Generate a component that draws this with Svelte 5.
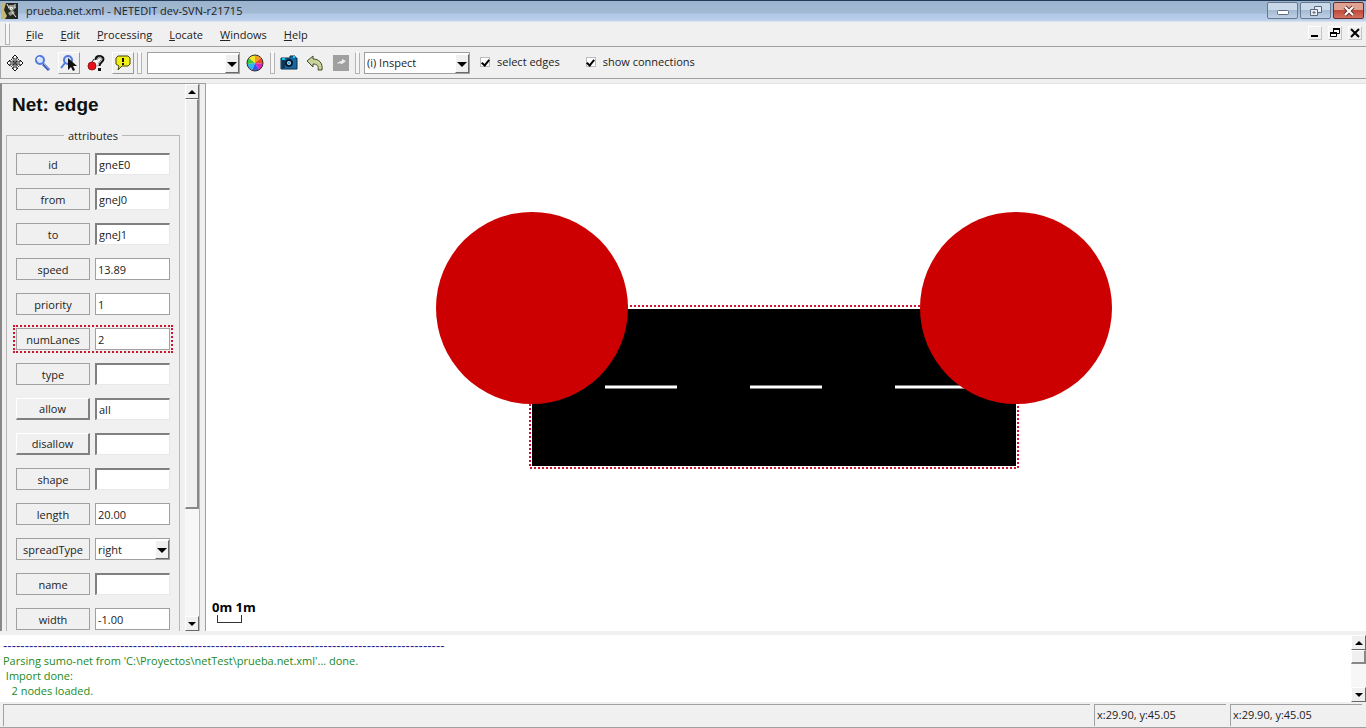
<script>
	let menus = ['File', 'Edit', 'Processing', 'Locate', 'Windows', 'Help'];

	let attributes = [
		{ name: 'id', value: 'gneE0', kind: 'sunken' },
		{ name: 'from', value: 'gneJ0', kind: 'sunken' },
		{ name: 'to', value: 'gneJ1', kind: 'sunken' },
		{ name: 'speed', value: '13.89' },
		{ name: 'priority', value: '1' },
		{ name: 'numLanes', value: '2', marked: true },
		{ name: 'type', value: '', kind: 'sunken' },
		{ name: 'allow', value: 'all', kind: 'sunken', raised: true },
		{ name: 'disallow', value: '', kind: 'sunken', raised: true },
		{ name: 'shape', value: '', kind: 'sunken' },
		{ name: 'length', value: '20.00' },
		{ name: 'spreadType', value: 'right', options: ['right', 'center'] },
		{ name: 'name', value: '', kind: 'sunken' },
		{ name: 'width', value: '-1.00' }
	];

	let selectEdges = true;
	let showConnections = true;
	let view = '';
	let mode = '(i) Inspect';
	let position = 'x:29.90, y:45.05';
	let rule = '-'.repeat(102);
</script>

<div class="window">
	<header class="titlebar">
		<svg class="app-icon" width="17" height="16" viewBox="0 0 17 16">
			<rect width="17" height="16" fill="#252820" />
			<path d="M0 0h5L3 7l3 6-2 3H0z" fill="#c3b878" />
			<path d="M8 2h5l2 3-3 2 2 3-5 3-2-3 3-2-3-3z" fill="#91968a" />
			<path d="M9 4l3 1-2 2zM11 9l4 5M6 1l2 4M14 1v4" stroke="#eee" fill="none" />
		</svg>
		<span class="title">prueba.net.xml - NETEDIT dev-SVN-r21715</span>
		<div class="window-buttons">
			<button aria-label="Minimize">
				<svg width="14" height="12" viewBox="0 0 14 12">
					<rect x="1.5" y="5.5" width="11" height="4" rx="1" fill="#fff" stroke="#5c6879" />
				</svg>
			</button>
			<button aria-label="Restore">
				<svg width="14" height="12" viewBox="0 0 14 12" fill="#e6edf6" stroke="#5c6879">
					<path d="M5.5 1.5h7v6h-7z" />
					<path d="M1.5 4.5h7v6h-7z" />
					<path d="M4 7h2v1H4z" />
				</svg>
			</button>
			<button class="close" aria-label="Close">
				<svg width="14" height="12" viewBox="0 0 14 12">
					<path d="M3 2l8 8M11 2l-8 8" stroke="#6b3533" stroke-width="4" />
					<path d="M3 2l8 8M11 2l-8 8" stroke="#fff" stroke-width="2" />
				</svg>
			</button>
		</div>
	</header>

	<nav class="menubar">
		<span class="grip"></span>
		{#each menus as menu}
			<button class="menu"><u>{menu[0]}</u>{menu.slice(1)}</button>
		{/each}
		<div class="child-buttons">
			<button aria-label="Minimize view">
				<svg width="12" height="12" viewBox="0 0 12 12"><path d="M2 8h7v2H2z" /></svg>
			</button>
			<button aria-label="Restore view">
				<svg width="12" height="12" viewBox="0 0 12 12" fill="#fff" stroke="#000">
					<path d="M4.5 1.5h6v5h-6z" /><path d="M4 2h7" stroke-width="2" />
					<path d="M1.5 5.5h6v4h-6z" /><path d="M1 6h7" stroke-width="2" />
				</svg>
			</button>
			<button aria-label="Close view">
				<svg width="12" height="12" viewBox="0 0 12 12">
					<path d="M2 2l8 8M10 2l-8 8" stroke="#000" stroke-width="2" />
				</svg>
			</button>
		</div>
	</nav>

	<div class="toolbar">
		<div class="tools">
			<button class="tool" aria-label="Recenter view">
				<svg width="18" height="18" viewBox="0 0 18 18" fill="#fff" stroke="#111">
					<path d="M9 1l3 3h-2v4h4V6l3 3-3 3v-2h-4v4h2l-3 3-3-3h2v-4H4v2L1 9l3-3v2h4V4H6z" />
					<path d="M5 5l8 8M13 5l-8 8" stroke-dasharray="2 1" />
					<circle cx="9" cy="9" r="1" />
				</svg>
			</button>
			<button class="tool" aria-label="Edit viewport">
				<svg width="18" height="18" viewBox="0 0 18 18">
					<path d="M10 10l6 6" stroke="#4360b8" stroke-width="3" />
					<path d="M11 10l5 5" stroke="#8fa8e8" />
					<circle cx="7" cy="6" r="4" fill="#d3e5fa" stroke="#5277dc" stroke-width="2" />
					<path d="M4 6a3 3 0 0 1 3-3" stroke="#fff" stroke-width="1" fill="none" />
				</svg>
			</button>
			<button class="tool raised" aria-label="Zoom to selection">
				<svg width="18" height="18" viewBox="0 0 18 18">
					<circle cx="8" cy="6" r="4" fill="#d3e5fa" stroke="#5277dc" stroke-width="2" />
					<path d="M5 9l-4 5" stroke="#5277dc" stroke-width="2" />
					<path d="M8 4v12l3-3 2 4 2-1-2-4h4z" fill="#111" />
				</svg>
			</button>
			<button class="tool" aria-label="Toggle tooltips">
				<svg width="18" height="18" viewBox="0 0 18 18" fill="none">
					<path d="M9 6c0-5 7-4 7-1 0 3-4 3-4 7" stroke="#111" stroke-width="3" />
					<path d="M10 6c0-4 5-3 5-1 0 3-4 3-4 7" stroke="#ddd" />
					<path d="M11 14h3v3h-3z" fill="#111" />
					<circle cx="5" cy="12" r="4" fill="#e80f18" stroke="#9f1119" />
					<path d="M5 8l2-3" stroke="#321" />
				</svg>
			</button>
			<button class="tool raised" aria-label="Show bubble help">
				<svg width="18" height="18" viewBox="0 0 18 18">
					<path d="M4 2h10l2 2v6l-2 2H8l-4 4 1-4-3-2V4z" fill="#f2ef18" stroke="#44430a" />
					<path d="M9 4v4M9 9v2" stroke="#111" stroke-width="2" />
				</svg>
			</button>
		</div>
		<span class="grip"></span>
		<div class="combo scheme">
			<select aria-label="Color scheme" bind:value={view}><option value=""></option></select>
			<span class="arrow"></span>
		</div>
		<button class="tool wheel" aria-label="Edit coloring scheme">
			<svg width="18" height="18" viewBox="0 0 18 18">
				<path d="M9 9V1a8 8 0 0 1 6 3z" fill="#f69b18" />
				<path d="M9 9l6-5a8 8 0 0 1 2 6z" fill="#f04922" />
				<path d="M9 9l8 1a8 8 0 0 1-4 6z" fill="#df22bd" />
				<path d="M9 9l4 7a8 8 0 0 1-7 0z" fill="#3853e8" />
				<path d="M9 9l-3 7a8 8 0 0 1-5-6z" fill="#28b9ea" />
				<path d="M9 9l-8 1a8 8 0 0 1 2-6z" fill="#40c936" />
				<path d="M9 9L3 4a8 8 0 0 1 6-3z" fill="#f4e42a" />
				<circle cx="9" cy="9" r="8" fill="none" stroke="#33302b" />
			</svg>
		</button>
		<span class="grip"></span>
		<div class="tools edit">
			<button class="tool" aria-label="Make snapshot">
				<svg width="18" height="18" viewBox="0 0 18 18">
					<path d="M1 4h9V2h5v2h2v11H1z" fill="#1869a2" stroke="#082b47" />
					<path d="M2 5h3v9H2z" fill="#0a3659" />
					<path d="M2 5h3M13 3h2" stroke="#18c8ee" stroke-width="2" />
					<circle cx="9" cy="9" r="3" fill="#bfe7fa" stroke="#071d31" stroke-width="2" />
					<circle cx="9" cy="9" r="1" fill="#278ed3" />
				</svg>
			</button>
			<button class="tool" aria-label="Undo">
				<svg width="18" height="18" viewBox="0 0 18 18">
					<path d="M1 7l6-5v3c6 0 10 4 9 11h-4c1-4-1-6-5-6v3z" fill="#c8d39c" stroke="#3f4a27" />
				</svg>
			</button>
			<button class="tool" aria-label="Redo" disabled>
				<svg width="18" height="18" viewBox="0 0 18 18">
					<path d="M1 1h16v16H1z" fill="#a0a0a0" />
					<path d="M5 10c1-2 3-3 5-3V5l4 2-4 3c-2-1-3-1-5 0z" fill="#eee" />
				</svg>
			</button>
		</div>
		<span class="grip"></span>
		<div class="combo mode">
			<select aria-label="Edit mode" bind:value={mode}><option>(i) Inspect</option></select>
			<span class="arrow"></span>
		</div>
		<label class="check"><input type="checkbox" bind:checked={selectEdges} />select edges</label>
		<label class="check"
			><input type="checkbox" bind:checked={showConnections} />show connections</label
		>
	</div>

	<main>
		<aside>
			<div class="panel">
				<h1>Net: edge</h1>
				<fieldset>
					<legend>attributes</legend>
					{#each attributes as attr}
						<div class="row" class:marked={attr.marked}>
							<button class="attr" class:lifted={attr.raised}>{attr.name}</button>
							{#if attr.options}
								<div class="combo">
									<select aria-label={attr.name} bind:value={attr.value}>
										{#each attr.options as option}<option>{option}</option>{/each}
									</select>
									<span class="arrow"></span>
								</div>
							{:else}
								<input
									class={attr.kind}
									type="text"
									aria-label={attr.name}
									bind:value={attr.value}
								/>
							{/if}
						</div>
					{/each}
				</fieldset>
			</div>
			<div class="scrollbar">
				<button class="step" aria-label="Scroll up"><i class="up"></i></button>
				<div class="thumb"></div>
				<button class="step" aria-label="Scroll down"><i class="down"></i></button>
			</div>
		</aside>

		<section class="canvas">
			<svg class="net" viewBox="0 0 1160 547" preserveAspectRatio="xMinYMin meet">
				<rect x="326" y="225" width="484" height="157" />
				<path
					d="M399 303h72M544 303h72M689 303h72"
					stroke="#fff"
					stroke-width="3"
				/>
				<rect class="selection" x="324" y="222" width="488" height="162" />
				<circle cx="326" cy="224" r="96" />
				<circle cx="810" cy="224" r="96" />
			</svg>
			<div class="scale">
				<span>0m 1m</span>
				<div class="bracket"></div>
			</div>
		</section>
	</main>

	<section class="log">
		<div class="messages">
			<p class="rule">{rule}</p>
			<p>Parsing sumo-net from 'C:\Proyectos\netTest\prueba.net.xml'... done.</p>
			<p>{' Import done:'}</p>
			<p>{'   2 nodes loaded.'}</p>
		</div>
		<div class="scrollbar">
			<button class="step" aria-label="Scroll log up"><i class="up"></i></button>
			<div class="thumb"></div>
			<button class="step" aria-label="Scroll log down"><i class="down"></i></button>
		</div>
	</section>

	<footer>
		<div class="status"></div>
		<div class="coords">{position}</div>
		<div class="coords">{position}</div>
	</footer>
</div>

<style>
	:global(body) {
		margin: 0;
	}

	.window {
		--face: #f0f0f0;
		--shadow: #a0a0a0;
		--dark: #696969;
		display: flex;
		flex-direction: column;
		height: 100vh;
		overflow: hidden;
		background: var(--face);
		color: #222;
		font-family: 'Open Sans', 'Noto Sans', sans-serif;
		font-size: 11px;
		line-height: 15px;
	}

	.window * {
		box-sizing: border-box;
	}

	button,
	input,
	select {
		font: inherit;
		color: inherit;
		margin: 0;
		padding: 0;
		border: 0;
		border-radius: 0;
		background: none;
	}

	svg {
		display: block;
	}

	.titlebar {
		display: flex;
		align-items: center;
		flex: none;
		height: 22px;
		padding: 0 0 2px 1px;
		border-top: 1px solid #233a58;
		background: linear-gradient(#9bb4cc 0%, #a2b9d3 55%, #b3c9e8 65%, #b9cce8 90%, #dfe8f3 100%);
	}

	.title {
		padding-left: 8px;
	}

	.window-buttons {
		display: flex;
		gap: 2px;
		align-self: flex-start;
		margin-left: auto;
		padding: 1px 2px 0 0;
	}

	.window-buttons button {
		display: grid;
		place-items: center;
		width: 31px;
		height: 17px;
		border: 1px solid #66798f;
		border-radius: 2px;
		background: linear-gradient(#c9d9ea 45%, #a5bbd3 50%, #bdd0e5);
	}

	.window-buttons .close {
		border-color: #692c2b;
		background: linear-gradient(#e0a293 45%, #c1493b 50%, #d3725f);
	}

	.menubar {
		display: flex;
		align-items: center;
		gap: 1px;
		flex: none;
		height: 25px;
		padding-left: 5px;
		border-bottom: 1px solid var(--shadow);
	}

	.grip {
		flex: none;
		width: 5px;
		height: 22px;
		border: 1px solid #b4b4b4;
		border-top-color: #fff;
		background: #f6f6f6;
	}

	.menubar .grip {
		margin-right: 7px;
	}

	.menu {
		padding: 0 8px;
	}

	.child-buttons {
		display: flex;
		gap: 6px;
		margin-left: auto;
		padding: 0 4px 2px 0;
	}

	.child-buttons button {
		display: grid;
		place-items: center;
		width: 14px;
		height: 14px;
		border: 1px solid #fff;
		border-right-color: #c4c4c4;
		border-bottom-color: #c4c4c4;
	}

	.toolbar {
		display: flex;
		align-items: center;
		flex: none;
		height: 32px;
		padding-left: 3px;
		border-bottom: 1px solid var(--shadow);
		border-left: 1px solid var(--shadow);
	}

	.tools {
		display: flex;
		gap: 5px;
		padding-right: 3px;
	}

	.tools.edit {
		gap: 4px;
		padding: 0 3px;
	}

	.tool {
		display: grid;
		place-items: center;
		width: 22px;
		height: 22px;
	}

	.tool.raised {
		border: 1px solid #fff;
		border-right-color: #999;
		border-bottom-color: #999;
	}

	.wheel {
		margin: 0 4px;
	}

	.combo {
		position: relative;
		height: 22px;
		border: 1px solid var(--shadow);
		background: #fff;
	}

	.combo select {
		display: block;
		width: 100%;
		height: 100%;
		padding-left: 2px;
		appearance: none;
	}

	.arrow {
		position: absolute;
		top: 1px;
		right: 0;
		bottom: 0;
		width: 14px;
		border: 1px solid #fff;
		border-right-color: var(--dark);
		border-bottom-color: var(--dark);
		background: var(--face);
		pointer-events: none;
	}

	.arrow::after {
		content: '';
		position: absolute;
		top: 7px;
		left: 1px;
		border: 5px solid transparent;
		border-top-color: #000;
		border-bottom: 0;
	}

	.scheme {
		width: 93px;
		margin-left: 5px;
	}

	.mode {
		width: 106px;
		margin: 0 10px 0 4px;
	}

	.check {
		display: flex;
		align-items: center;
		gap: 7px;
		margin-right: 26px;
		padding-bottom: 2px;
	}

	.check input {
		display: grid;
		place-items: center;
		width: 10px;
		height: 10px;
		border: 1px solid #bbb;
		background: #fff;
		appearance: none;
	}

	.check input:checked::after {
		content: '';
		width: 3px;
		height: 6px;
		border: solid #000;
		border-width: 0 2px 2px 0;
		transform: rotate(40deg);
	}

	main {
		display: flex;
		flex: 1;
		min-height: 0;
		margin-top: 4px;
	}

	aside {
		display: flex;
		flex: none;
		width: 206px;
		padding-right: 5px;
		border-top: 1px solid var(--shadow);
		border-left: 2px solid #888;
		border-right: 1px solid var(--shadow);
	}

	.panel {
		flex: 1;
		overflow: hidden;
		padding: 9px 5px 0 4px;
	}

	h1 {
		margin: 0 0 11px 6px;
		color: #111;
		font: bold 19px/24px 'Liberation Sans', Arial, sans-serif;
	}

	fieldset {
		display: flex;
		flex-direction: column;
		gap: 7px;
		min-width: 0;
		margin: 0;
		padding: 7px 6px 8px;
		border: 1px solid #b8b8b8;
	}

	legend {
		margin: 0 auto;
		padding: 0 4px;
	}

	.row {
		display: flex;
		gap: 5px;
		height: 28px;
		padding: 3px;
	}

	.row.marked {
		outline: 2px dotted #d0142c;
		outline-offset: -2px;
	}

	.attr {
		width: 74px;
		flex: none;
		border: 1px solid var(--shadow);
	}

	.attr.lifted {
		border-color: #fff #808080 #808080 #fff;
		border-width: 1px 2px 2px 1px;
	}

	.row input,
	.row .combo {
		flex: 1;
		min-width: 0;
		border: 1px solid var(--shadow);
		background: #fff;
	}

	.row input {
		padding: 0 2px;
	}

	.row .sunken {
		border-color: #808080 #e8e8e8 #e8e8e8 #808080;
		border-width: 2px 1px 1px 2px;
	}

	.scrollbar {
		display: flex;
		flex-direction: column;
		flex: none;
		width: 15px;
		background: #f7f7f7;
	}

	aside .scrollbar {
		border-right: 1px solid #b8b8b8;
	}

	.step {
		display: grid;
		place-items: center;
		flex: none;
		width: 100%;
		height: 15px;
		border: 1px solid #fff;
		border-right-color: var(--dark);
		border-bottom-color: var(--dark);
		background: var(--face);
	}

	.step:last-child {
		margin-top: auto;
	}

	.up,
	.down {
		border: 4px solid transparent;
	}

	.up {
		border-top: 0;
		border-bottom-color: #000;
	}

	.down {
		border-bottom: 0;
		border-top-color: #000;
	}

	.thumb {
		height: 75%;
		border: 1px solid #fff;
		border-right: 2px solid #888;
		border-bottom: 2px solid #888;
		background: var(--face);
	}

	.canvas {
		position: relative;
		flex: 1;
		min-width: 0;
		overflow: hidden;
		border-top: 1px solid #e4e4e4;
		background: #fff;
	}

	.net {
		width: 100%;
		height: 100%;
	}

	.net circle {
		fill: #c00;
	}

	.net .selection {
		fill: none;
		stroke: #d0142c;
		stroke-width: 2;
		stroke-dasharray: 2 2;
	}

	.scale {
		position: absolute;
		bottom: 8px;
		left: 6px;
		color: #000;
		font-size: 13px;
		font-weight: bold;
	}

	.bracket {
		width: 25px;
		height: 8px;
		margin-left: 5px;
		border: 1px solid #333;
		border-top: 0;
	}

	.log {
		display: flex;
		flex: none;
		height: 67px;
		margin-top: 4px;
		background: #fff;
	}

	.messages {
		flex: 1;
		padding: 3px;
		color: #1c8a24;
	}

	.messages p {
		margin: 0;
		white-space: pre;
	}

	.messages .rule {
		color: #2a2490;
		font-family: 'Liberation Sans', Arial, sans-serif;
		font-size: 13px;
	}

	.log .thumb {
		height: 14px;
	}

	footer {
		display: flex;
		gap: 4px;
		flex: none;
		height: 26px;
		padding: 2px 4px 1px 3px;
		border-bottom: 1px solid var(--shadow);
	}

	.status,
	.coords {
		padding: 2px;
		border-top: 1px solid var(--shadow);
		border-left: 1px solid var(--shadow);
	}

	.status {
		flex: 1;
	}

	.coords {
		width: 132px;
	}
</style>
